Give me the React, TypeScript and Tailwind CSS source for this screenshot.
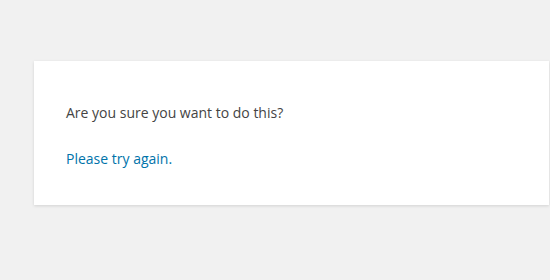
export default function App() {
  return (
    <div className="min-h-[280px] w-[550px] overflow-hidden bg-[#f1f1f1] pt-[61px] pl-[34px]" style={{ fontFamily: '"Open Sans", "Noto Sans", sans-serif' }}>
      <div className="w-[515px] bg-white px-[32px] pt-[41px] pb-[36px] shadow-[0_1px_3px_rgba(0,0,0,0.13)]">
        <p className="text-[14px] leading-[21px] text-[#444]">Are you sure you want to do this?</p>
        <p className="mt-[25px] text-[14px] leading-[21px]">
          <a href="#" className="text-[#0073aa]">Please try again.</a>
        </p>
      </div>
    </div>
  );
}
